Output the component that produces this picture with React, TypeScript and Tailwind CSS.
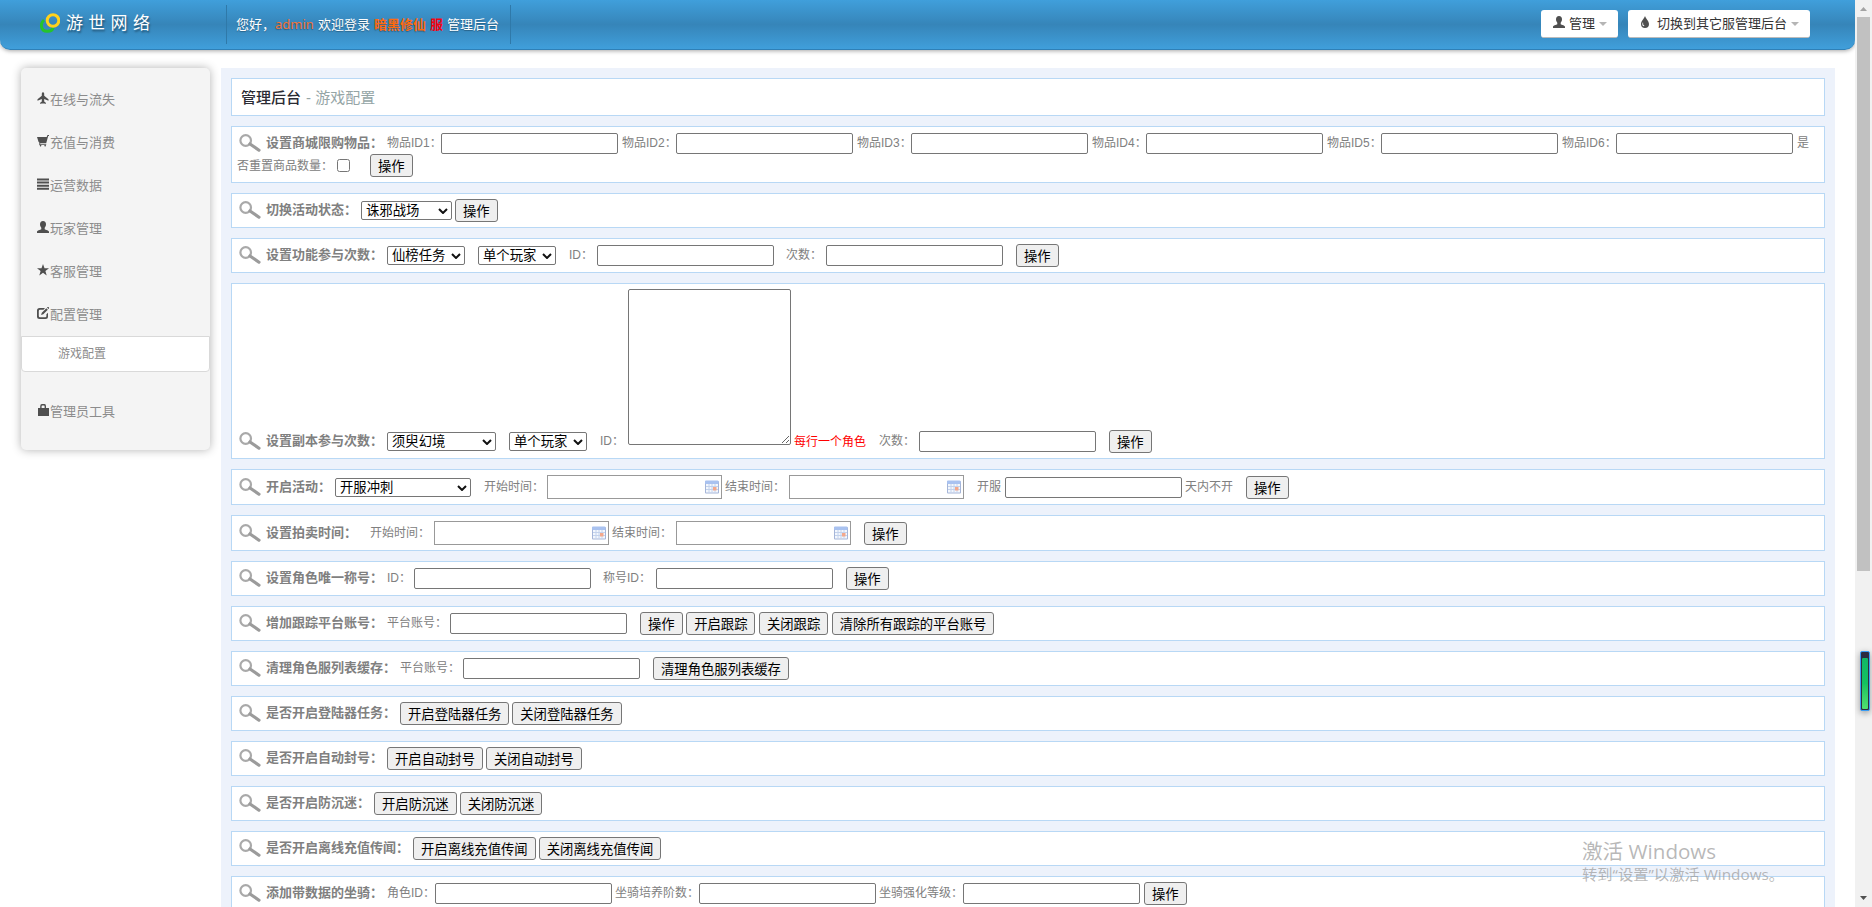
import React from 'react';

const SELECT_ARROW = 'M1 1l4 4 4-4';

function Glyph({ d, className = '' }: { d: string; className?: string }) {
  return (
    <svg viewBox="0 0 12 12" className={`h-3 w-3 shrink-0 ${className}`} fill="#4f4f4f" fillRule="evenodd" aria-hidden>
      <path d={d} />
    </svg>
  );
}

const ICONS = {
  plane: 'M4.800 1.600Q6 -1.600 7.200 1.600V3.800L11.500 7.200V8.800L7.200 7.100v2.400l1.600 1.300V12L6.600 11.300 6 12l-.6-.7L3.200 12v-1.200l1.600-1.300V7.100L.5 8.800V7.200l4.300-3.400z',
  cart: 'M0 2h9.700L10.500 0H12v.9h-.8L9.200 8.300H3.200v.9h6v.9H8.800a.8.8 0 1 1-1.300 0H4.200a.8.8 0 1 1-1.300 0h-.6V7.600L1.600 7z',
  list: 'M0 .5h12v2H0zM0 3.600h12v2H0zM0 6.700h12v2H0zM0 9.800h12v2H0z',
  user: 'M6 0c2 0 3 1.300 3 3.200 0 1.700-.7 2.700-1.300 3.500v1.600c1 .8 4.300 1.200 4.300 2.600V12H0v-1.100c0-1.400 3.300-1.800 4.300-2.600V6.700C3.700 5.900 3 4.900 3 3.200 3 1.300 4 0 6 0z',
  star: 'M6 0l1.500 4.300H12L8.400 7l1.300 4.500L6 8.800l-3.700 2.700L3.600 7 0 4.300h4.500z',
  edit: 'M2.500 1H8L6.500 2.700H3A1.200 1.200 0 0 0 1.800 3.900V9A1.200 1.200 0 0 0 3 10.200h5.200A1.200 1.200 0 0 0 9.400 9V7.300L11 5.700v3.800A2.500 2.500 0 0 1 8.500 12h-6A2.500 2.500 0 0 1 0 9.500v-6A2.500 2.500 0 0 1 2.500 1zM9.300 1.300l1.500 1.500L6.300 7.300l-2.200.7.700-2.200zM10 .6l.6-.6h.8l.6.6v.8l-.6.600z',
  lock: 'M1 4h2.200V2.300Q3.200 0 5 0h2.500q1.500 0 1.500 2.300V4H12v8H1zM4.600 4h3V2.200Q7.600 1.500 7 1.500H5.200q-.6 0-.6.7z',
  tint: 'M6 0C6.500 2.200 10 5 10 8a4 4 0 0 1-8 0C2 5 5.500 2.200 6 0zM3.500 7c-.6 2 .2 3.300 1.500 3.300.5 0 .5-.5.2-.7C4 9 4 8 4.200 7.100c.1-.6-.5-.7-.7-.1z',
};

const MENU = [
  { icon: ICONS.plane, label: '在线与流失' },
  { icon: ICONS.cart, label: '充值与消费' },
  { icon: ICONS.list, label: '运营数据' },
  { icon: ICONS.user, label: '玩家管理' },
  { icon: ICONS.star, label: '客服管理' },
  { icon: ICONS.edit, label: '配置管理' },
];

function MenuItem({ icon, label }: { icon: string; label: string }) {
  return (
    <li className="flex h-[43px] items-center pb-0.5 pl-4 text-[13px] text-[#8c8c8c]">
      <Glyph d={icon} className="mr-px -mt-[3px]" />
      {label}
    </li>
  );
}

function Row({ title, titleWidth, className = '', children }: {
  title: string;
  titleWidth: string;
  className?: string;
  children: React.ReactNode;
}) {
  return (
    <div className={`flex h-[35px] shrink-0 items-center border border-[#b8d8f5] bg-white pl-[7px] ${className}`}>
      <Title title={title} titleWidth={titleWidth} />
      {children}
    </div>
  );
}

function Title({ title, titleWidth }: { title: string; titleWidth: string }) {
  return (
    <>
      <svg viewBox="0 0 22 18" className="-mt-px mr-[5px] h-[18px] w-[22px] shrink-0" fill="none" aria-hidden>
        <circle cx="6.700" cy="6.500" r="5.300" stroke="#a9a9a9" strokeWidth="2.200" />
        <path d="M11 10l9 6.200" stroke="#9b9b9b" strokeWidth="3.200" strokeLinecap="round" />
      </svg>
      <b className={`-mt-px shrink-0 whitespace-nowrap text-[13px] leading-4 ${titleWidth}`}>{title}</b>
    </>
  );
}

function Text({ w, children, className = '-mt-px' }: { w: string; children: React.ReactNode; className?: string }) {
  return <span className={`shrink-0 whitespace-nowrap text-xs leading-4 ${w} ${className}`}>{children}</span>;
}

function Input({ className = '' }: { className?: string }) {
  return <input className={`h-[21px] w-[177px] shrink-0 rounded-[2px] border border-[#767676] bg-white ${className}`} />;
}

function DateInput() {
  return (
    <span className="-mt-px mr-[3px] flex h-6 w-[175px] shrink-0 items-center justify-end border border-[#999] bg-white pr-0.5">
      <svg viewBox="0 0 14 14" className="h-3.5 w-3.5" aria-hidden>
        <rect x="0" y="1" width="14" height="12.500" rx="1" fill="#a5b5d8" />
        <rect x="1" y="4" width="12" height="8.500" fill="#f3f7fd" />
        <rect x="0" y="0.500" width="13.500" height="3.500" rx="1" fill="#a9c2f0" />
        <path d="M1 6.500h12M1 9.500h12M4 4v8.500M7 4v8.500M10 4v8.500" stroke="#c3d2ec" />
        <rect x="8" y="7" width="3.500" height="3.500" fill="#f3a88c" />
      </svg>
    </span>
  );
}

function Select({ value, className }: { value: string; className: string }) {
  return (
    <span className={`relative block h-[19px] shrink-0 ${className}`}>
      <select className="block h-full w-full appearance-none rounded-[2px] border border-[#767676] bg-white pl-1 text-[13.333px] leading-[17px] text-black">
        <option>{value}</option>
      </select>
      <svg viewBox="0 0 10 6" className="pointer-events-none absolute right-1 top-[7px] h-1.5 w-2.5" aria-hidden>
        <path d={SELECT_ARROW} fill="none" stroke="#111" strokeWidth="2" />
      </svg>
    </span>
  );
}

function Btn({ children = '操作', className = '' }: { children?: React.ReactNode; className?: string }) {
  return (
    <button
      className={`h-[23px] shrink-0 whitespace-nowrap rounded-[3px] border border-[#767676] bg-[#efefef]
        px-[7px] pt-px text-[13.333px] leading-[19px] text-black ${className}`}
    >
      {children}
    </button>
  );
}

function Header() {
  return (
    <header
      className="flex h-[50px] items-center rounded-b-[10px] border-b border-[#2f80b7] bg-linear-to-b
        from-[#409fdb] via-[#3685b9] to-[#409fdb] text-[13px] text-white shadow-[0_1px_4px_rgba(0,0,0,0.35)]"
    >
      <div className="flex h-full w-[226px] items-center pb-0.5 pl-10">
        <svg viewBox="0 0 20 20" className="-mt-0.5 h-5 w-5" fill="none" aria-hidden>
          <path d="M4 7C-.5 11 1 18 7 18.200c3 .1 5.500-1.200 6.200-3.500" stroke="#25c32c" strokeWidth="3" />
          <circle cx="13" cy="7.500" r="5.800" stroke="#ffd21c" strokeWidth="3" />
        </svg>
        <span className="ml-1.5 text-[17px] tracking-[5.3px] [text-shadow:1px_2px_2px_rgba(0,0,0,0.4)]">游世网络</span>
      </div>
      <div className="flex h-[39px] w-[285px] items-center whitespace-nowrap border-x border-[#2f79a9] pl-[9px] [text-shadow:0_1px_1px_rgba(0,0,0,0.3)]">
        <span className="w-[39px]">您好，</span>
        <span className="w-[43px] font-['Noto_Sans'] text-[13px] text-[#f0743a]">admin</span>
        <span className="w-14">欢迎登录</span>
        <span className="w-14 font-bold text-[#ff6a10]">暗黑修仙</span>
        <span className="w-[17px] font-bold text-[#f5000f] [text-shadow:none]">服</span>
        <span>管理后台</span>
      </div>
      <div className="ml-auto mr-[45px] flex gap-2.5 pb-px text-[#333]">
        <button className="flex h-7 w-[77px] items-center rounded-[3px] border-b border-[#bbb] bg-white pl-3">
          <Glyph d={ICONS.user} className="mr-1 -mt-1" />
          管理
          <Caret />
        </button>
        <button className="flex h-7 w-[182px] items-center rounded-[3px] border-b border-[#bbb] bg-white pl-[11px]">
          <Glyph d={ICONS.tint} className="mr-1.5 -mt-1" />
          切换到其它服管理后台
          <Caret />
        </button>
      </div>
    </header>
  );
}

function Caret() {
  return (
    <svg viewBox="0 0 8 4" className="ml-1 h-1 w-2" fill="#b5b5b5" aria-hidden>
      <path d="M0 0h8L4 4z" />
    </svg>
  );
}

function Sidebar() {
  return (
    <nav className="ml-[21px] mt-[18px] h-[382px] w-[189px] shrink-0 rounded-[5px] bg-[#f4f4f4] pt-[11px] shadow-[0_0_10px_rgba(0,0,0,0.3)]">
      <ul>
        {MENU.map((item) => (
          <MenuItem key={item.label} {...item} />
        ))}
        <li className="-mt-px mb-[19px] flex h-[36px] items-center rounded-b-[4px] border border-[#d9d9d9] bg-white pl-9 text-xs text-[#8c8c8c]">
          游戏配置
        </li>
        <MenuItem icon={ICONS.lock} label="管理员工具" />
      </ul>
    </nav>
  );
}

function Content() {
  return (
    <main className="ml-[11px] mt-[18px] flex h-[839px] w-[1614px] shrink-0 flex-col gap-2.5 overflow-hidden bg-[#edf2fb] px-2.5 pt-2.5 text-[#808080]">
      <div className="flex h-[38px] shrink-0 items-center border border-[#b8d8f5] bg-white pl-[9px] pt-0.5 text-[15px]">
        <span className="font-medium text-[#2b2b33]">管理后台</span>
        <span className="ml-[5px] text-[#95a5a6]">- 游戏配置</span>
      </div>

      <div className="h-[57px] shrink-0 border border-[#b8d8f5] bg-white">
        <div className="flex h-[33px] items-center pl-[7px]">
          <Title title="设置商城限购物品：" titleWidth="w-[121px]" />
          {[1, 2, 3, 4, 5, 6].map((n) => (
            <React.Fragment key={n}>
              <Text w="w-[54px]" className="-mt-0.5">物品ID{n}：</Text>
              <Input className="mr-1" />
            </React.Fragment>
          ))}
          <Text w="w-3" className="-mt-0.5">是</Text>
        </div>
        <div className="-mt-[5px] flex h-[22px] items-center pl-[5px]">
          <Text w="w-[100px]">否重置商品数量：</Text>
          <input type="checkbox" className="-mt-px h-[13px] w-[13px] shrink-0" />
          <Btn className="-mt-px ml-5" />
        </div>
      </div>

      <Row title="切换活动状态：" titleWidth="w-[95px]">
        <Select value="诛邪战场" className="mr-[3px] w-[91px]" />
        <Btn />
      </Row>

      <Row title="设置功能参与次数：" titleWidth="w-[121px]">
        <Select value="仙榜任务" className="mr-[13px] w-[78px]" />
        <Select value="单个玩家" className="mr-[13px] w-[78px]" />
        <Text w="w-[28px]">ID：</Text>
        <Input className="mr-[12px]" />
        <Text w="w-[40px]">次数：</Text>
        <Input className="mr-[13px]" />
        <Btn />
      </Row>

      <div className="flex h-[176px] shrink-0 items-end border border-[#b8d8f5] bg-white pl-[7px]">
        <div className="flex h-[33px] items-center">
          <Title title="设置副本参与次数：" titleWidth="w-[121px]" />
          <Select value="须臾幻境" className="mr-[13px] w-[109px]" />
          <Select value="单个玩家" className="mr-[13px] w-[78px]" />
          <Text w="w-[28px]">ID：</Text>
        </div>
        <textarea className="mb-[13px] mr-[3px] h-[156px] w-[163px] shrink-0 resize rounded-[2px] border border-[#767676] bg-white" />
        <div className="flex h-[33px] items-center">
          <Text w="w-[85px]" className="text-[#ff0000]">每行一个角色</Text>
          <Text w="w-[40px]">次数：</Text>
          <Input className="mr-[13px]" />
          <Btn />
        </div>
      </div>

      <Row title="开启活动：" titleWidth="w-[69px]" className="h-[36px] pt-px">
        <Select value="开服冲刺" className="mr-[13px] w-[136px]" />
        <Text w="w-[63px]">开始时间：</Text>
        <DateInput />
        <Text w="w-[64px]">结束时间：</Text>
        <DateInput />
        <Text w="w-[28px]" className="-mt-px ml-[10px]">开服</Text>
        <Input className="mr-[3px]" />
        <Text w="w-[61px]">天内不开</Text>
        <Btn />
      </Row>

      <Row title="设置拍卖时间：" titleWidth="w-[104px]" className="h-[36px] pt-px">
        <Text w="w-[64px]">开始时间：</Text>
        <DateInput />
        <Text w="w-[64px]">结束时间：</Text>
        <DateInput />
        <Btn className="ml-[10px]" />
      </Row>

      <Row title="设置角色唯一称号：" titleWidth="w-[121px]">
        <Text w="w-[27px]">ID：</Text>
        <Input className="mr-[12px]" />
        <Text w="w-[53px]">称号ID：</Text>
        <Input className="mr-[13px]" />
        <Btn />
      </Row>

      <Row title="增加跟踪平台账号：" titleWidth="w-[121px]">
        <Text w="w-[63px]">平台账号：</Text>
        <Input className="mr-[13px]" />
        <div className="flex gap-[3.5px]">
          <Btn />
          <Btn>开启跟踪</Btn>
          <Btn>关闭跟踪</Btn>
          <Btn>清除所有跟踪的平台账号</Btn>
        </div>
      </Row>

      <Row title="清理角色服列表缓存：" titleWidth="w-[134px]">
        <Text w="w-[63px]">平台账号：</Text>
        <Input className="mr-[13px]" />
        <Btn>清理角色服列表缓存</Btn>
      </Row>

      <Row title="是否开启登陆器任务：" titleWidth="w-[134px]">
        <Btn className="mr-[3px]">开启登陆器任务</Btn>
        <Btn>关闭登陆器任务</Btn>
      </Row>

      <Row title="是否开启自动封号：" titleWidth="w-[121px]">
        <Btn className="mr-[3px]">开启自动封号</Btn>
        <Btn>关闭自动封号</Btn>
      </Row>

      <Row title="是否开启防沉迷：" titleWidth="w-[108px]">
        <Btn className="mr-[3px]">开启防沉迷</Btn>
        <Btn>关闭防沉迷</Btn>
      </Row>

      <Row title="是否开启离线充值传闻：" titleWidth="w-[147px]">
        <Btn className="mr-[3px]">开启离线充值传闻</Btn>
        <Btn>关闭离线充值传闻</Btn>
      </Row>

      <Row title="添加带数据的坐骑：" titleWidth="w-[121px]">
        <Text w="w-[48px]">角色ID：</Text>
        <Input className="mr-[3px]" />
        <Text w="w-[84px]">坐骑培养阶数：</Text>
        <Input className="mr-[3px]" />
        <Text w="w-[84px]">坐骑强化等级：</Text>
        <Input className="mr-1" />
        <Btn />
      </Row>
    </main>
  );
}

function Scrollbar() {
  return (
    <div className="relative flex w-[17px] shrink-0 flex-col items-center bg-[#f1f1f1]">
      <svg viewBox="0 0 17 17" className="h-[17px] w-[17px]" fill="#a3a3a3" aria-hidden>
        <path d="M5 11h7L8.500 7z" />
      </svg>
      <div className="h-[554px] w-[13px] bg-[#c1c1c1]" />
      <svg viewBox="0 0 17 17" className="mt-auto h-[17px] w-[17px]" fill="#505050" aria-hidden>
        <path d="M5 6h7l-3.500 4z" />
      </svg>
      <div className="absolute left-[5px] top-[651px] h-[60px] w-2.5 rounded-[2px] border border-[#3a9df5] bg-[#2c2c40] p-px pt-1.5 shadow-[0_2px_6px_rgba(0,0,0,0.35)]">
        <div className="h-full rounded-[1px] bg-linear-to-b from-[#12b866] via-[#14c160] to-[#4fe070]" />
      </div>
    </div>
  );
}

export default function App() {
  return (
    <div className="relative flex h-[907px] w-[1872px] overflow-hidden bg-white font-['Liberation_Sans','Noto_Sans_CJK_SC',sans-serif]">
      <div className="w-[1855px] shrink-0">
        <Header />
        <div className="flex items-start">
          <Sidebar />
          <Content />
        </div>
      </div>
      <Scrollbar />
      <div className="pointer-events-none absolute left-[1582px] top-[837px] whitespace-nowrap font-['Open_Sans','Noto_Sans_CJK_SC',sans-serif] text-[#999]/70">
        <p className="text-[20.6px] leading-[28px]">激活 Windows</p>
        <p className="text-[15.3px] leading-[19px]">转到“设置”以激活 Windows。</p>
      </div>
    </div>
  );
}
